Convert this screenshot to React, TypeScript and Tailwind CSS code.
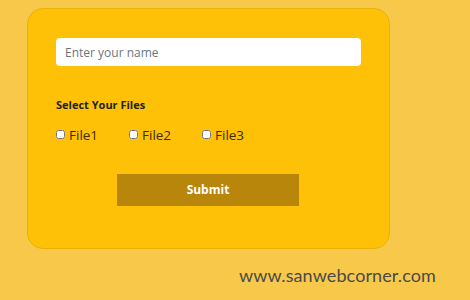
export default function App() {
  const files = ["File1", "File2", "File3"]
  return (
    <div className="w-[470px] h-[300px] bg-[#f7c84a] pt-[8px] pl-[27px] relative font-['Open_Sans',sans-serif]">
      <div className="w-[363px] h-[241px] bg-[#ffc107] border border-[#e8b10a] rounded-[16px] pt-[29px] pl-[28px]">
        <input
          type="text"
          placeholder="Enter your name"
          className="w-[305px] h-[28px] bg-white rounded-[4px] px-[9px] text-[12px] text-gray-700 placeholder:text-[#6c757d] outline-none"
        />
        <div className="mt-[31px] text-[11px] font-bold text-[#212121]">Select Your Files</div>
        <div className="mt-[11px] flex items-center">
          {files.map((f) => (
            <label key={f} className="w-[73px] flex items-center gap-[4px] text-[13.5px] text-[#3b2e00]">
              <input type="checkbox" className="w-[9px] h-[9px] m-0 accent-gray-300" />
              <span>{f}</span>
            </label>
          ))}
        </div>
        <button className="mt-[29px] ml-[61px] w-[182px] h-[32px] bg-[#b8860b] text-white text-[12px] font-bold">
          Submit
        </button>
      </div>
      <div className="absolute left-[239px] top-[262px] text-[18px] text-[#4a4a4a] font-['Lato',sans-serif] tracking-[0.1px]">
        www.sanwebcorner.com
      </div>
    </div>
  )
}
